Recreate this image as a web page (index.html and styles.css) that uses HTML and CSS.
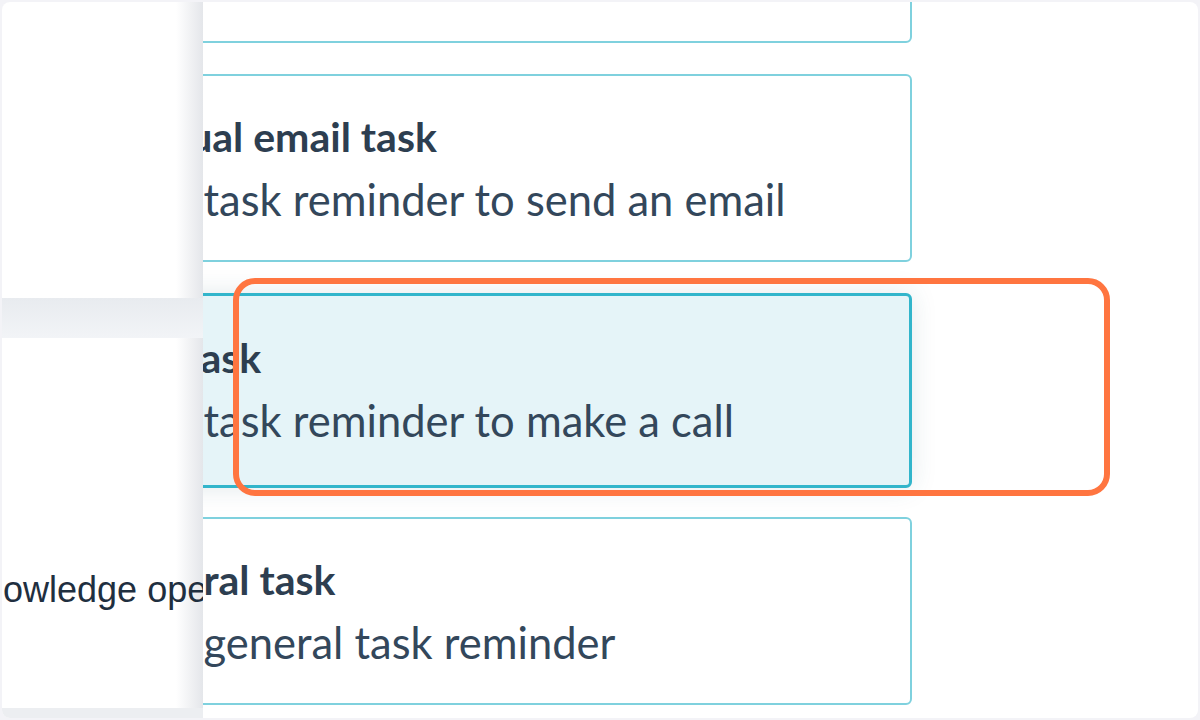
FILE: index.html
```html
<!DOCTYPE html>
<html lang="en">
<head>
  <meta charset="UTF-8" />
  <meta name="viewport" content="width=device-width, initial-scale=1" />
  <title>Sequence step</title>
  <link rel="stylesheet" href="styles.css">
</head>
<body>
  <div class="frame">
    <div class="screen">

      <div class="task-list">
        <div class="task-card">
          <div class="task-title">Automated email</div>
          <div class="task-desc">Send a personalized email</div>
        </div>
        <div class="task-card">
          <div class="task-title">Manual email task</div>
          <div class="task-desc">Create a task reminder to send an email</div>
        </div>
        <div class="task-card selected">
          <div class="task-title">Call task</div>
          <div class="task-desc">Create a task reminder to make a call</div>
        </div>
        <div class="task-card">
          <div class="task-title">General task</div>
          <div class="task-desc">Create a general task reminder</div>
        </div>
      </div>

      <div class="sidebar">
        <div class="sidebar-top"></div>
        <div class="sidebar-band"></div>
        <div class="sidebar-body">
          <div class="sidebar-text">Acknowledge open</div>
        </div>
      </div>

      <div class="highlight"></div>
    </div>
  </div>
</body>
</html>
```

FILE: styles.css
```css
html, body {
  margin: 0;
  padding: 0;
  background: #f3f3f7;
}

.frame {
  width: 1200px;
  height: 720px;
  padding: 2px;
  box-sizing: border-box;
}

.screen {
  position: relative;
  height: 716px;
  background: #fff;
  border-radius: 8px;
  overflow: hidden;
}

.task-list {
  display: flex;
  flex-direction: column;
  gap: 31px;
  margin-top: -147px;
  margin-left: 10px;
  width: 900px;
}

.task-card {
  height: 188px;
  box-sizing: border-box;
  border: 2px solid #7fd1de;
  border-radius: 6px;
  background: #fff;
  padding: 30px 0 0 19px;
  font-family: Lato, "Noto Sans", sans-serif;
  white-space: nowrap;
  overflow: hidden;
}

.task-card.selected {
  height: 195px;
  margin-bottom: -2px;
  border: 3px solid #32b5cb;
  background: #e5f4f8;
  padding-top: 31px;
  padding-left: 18px;
  box-shadow: 0 0 26px rgba(40, 90, 110, 0.13);
}

.task-title {
  margin-left: 74px;
  font-size: 41px;
  line-height: 62px;
  font-weight: 700;
  color: #2d3e50;
}

.task-desc {
  font-size: 43.5px;
  line-height: 62px;
  font-weight: 400;
  color: #33475b;
}

.sidebar {
  position: absolute;
  left: 0;
  top: 0;
  width: 201px;
  height: 716px;
  display: flex;
  flex-direction: column;
  background: #eceef1;
  overflow: hidden;
}

.sidebar-top,
.sidebar-body {
  background: linear-gradient(to right, #fff 0, #fff 174px, #e4e6ea 201px);
}

.sidebar-top {
  height: 296px;
}

.sidebar-band {
  height: 40px;
  background: linear-gradient(to bottom, #e8ebef, #f2f4f7);
}

.sidebar-body {
  height: 370px;
  padding-top: 231px;
  box-sizing: border-box;
}

.sidebar-text {
  font-family: "Liberation Sans", Arial, sans-serif;
  font-size: 36px;
  color: #1f2f40;
  white-space: nowrap;
  margin-left: -79px;
}

.highlight {
  position: absolute;
  left: 231px;
  top: 276px;
  width: 877px;
  height: 218px;
  box-sizing: border-box;
  border: 6px solid #ff7540;
  border-radius: 22px;
}
```
